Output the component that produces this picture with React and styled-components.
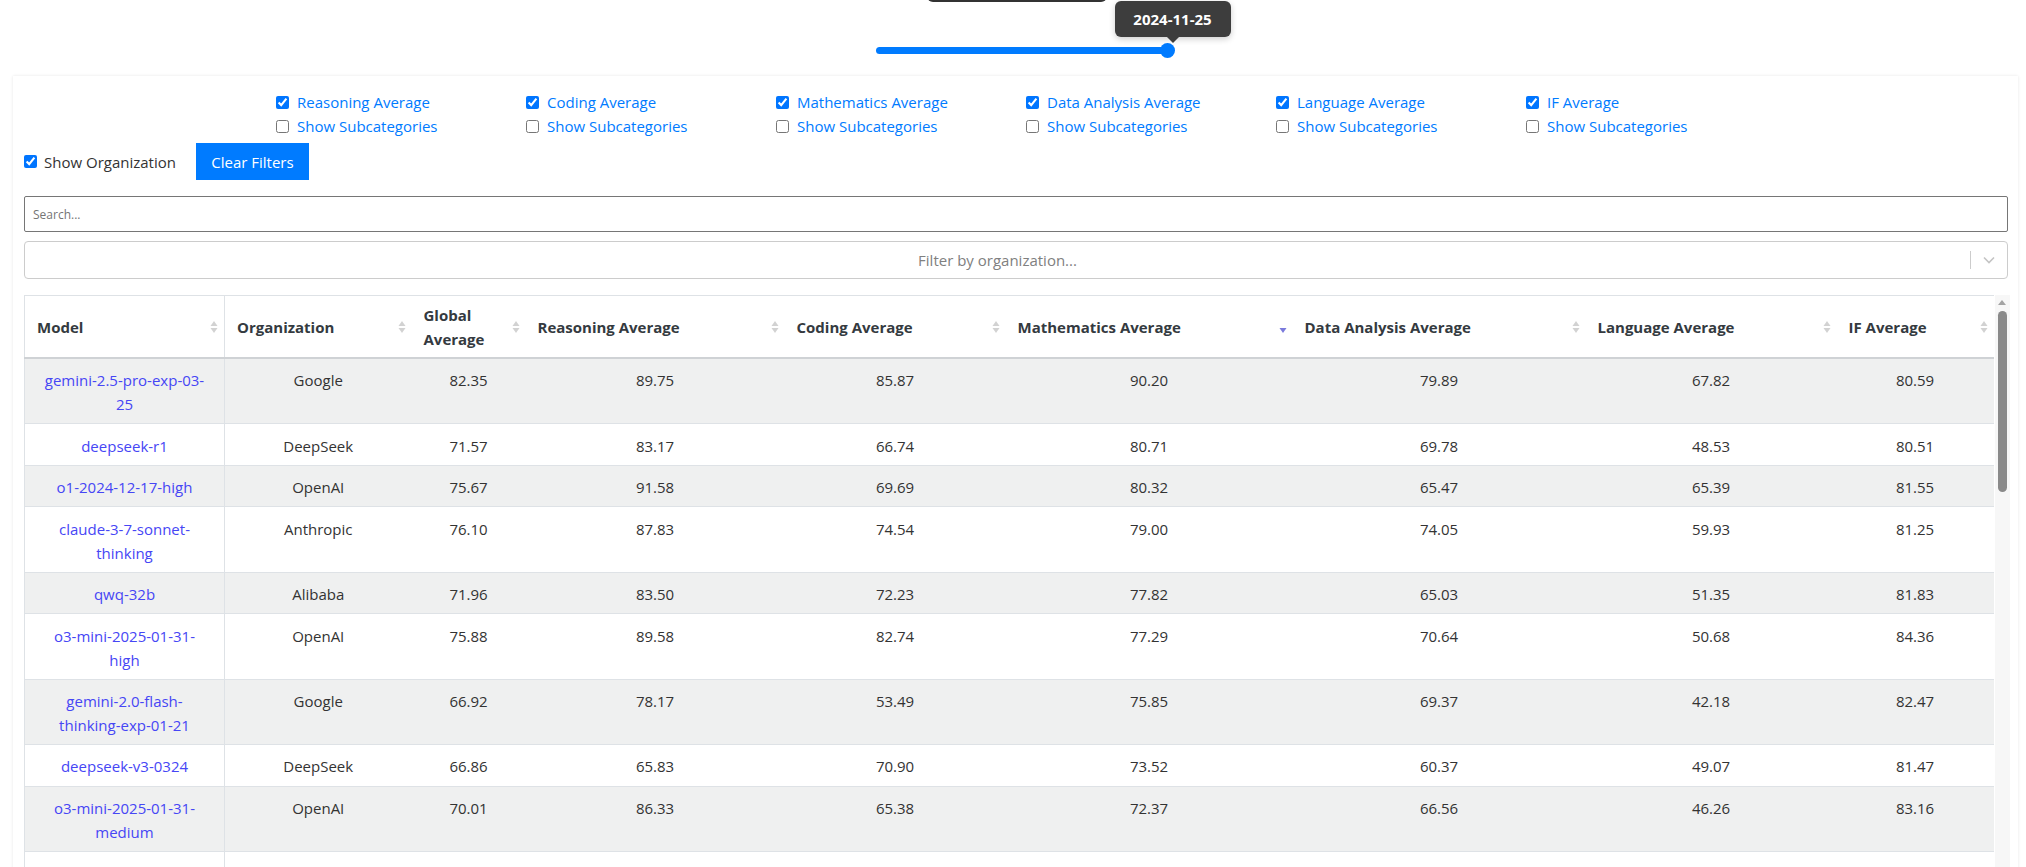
import React from 'react';
import styled, { createGlobalStyle } from 'styled-components';

const GlobalStyle = createGlobalStyle`
  body {
    margin: 0;
    background: #fff;
    font-family: "Open Sans", "Noto Sans", sans-serif;
    color: #333;
  }
`;

const SliderSection = styled.div`
  position: relative;
  height: 76px;
`;

const TopTip = styled.div`
  position: absolute;
  left: 927px;
  top: -4px;
  width: 180px;
  height: 6px;
  background: #333;
  border-radius: 0 0 6px 6px;
`;

const SliderRow = styled.div`
  display: flex;
  padding: 47px 0 0 876px;
`;

const Track = styled.div`
  position: relative;
  width: 291px;
  height: 7px;
  background: #007bff;
  border-radius: 4px;
`;

const Thumb = styled.span`
  position: absolute;
  right: -7.5px;
  top: -4px;
  width: 15px;
  height: 15px;
  border-radius: 50%;
  background: #007bff;
`;

const Tooltip = styled.div`
  position: absolute;
  left: -45px;
  bottom: calc(100% + 6px);
  width: 116px;
  height: 36px;
  display: flex;
  align-items: center;
  justify-content: center;
  background: #3d3d3d;
  color: #fff;
  font-weight: 700;
  font-size: 15px;
  border-radius: 6px;
  box-shadow: 0 2px 6px rgba(0, 0, 0, 0.2);

  &::after {
    content: '';
    position: absolute;
    left: 50%;
    top: 100%;
    margin-left: -6px;
    border: 6px solid transparent;
    border-top-color: #3d3d3d;
    border-bottom: 0;
  }
`;

const Card = styled.div`
  margin: 0 8px 0 13px;
  padding: 14px 10px 0 11px;
  background: #fff;
  box-shadow: 0 0 3px rgba(0, 0, 0, 0.1);
`;

const FilterGroups = styled.div`
  display: flex;
  padding-left: 252px;
`;

const FilterGroup = styled.div`
  width: 250px;
  display: flex;
  flex-direction: column;
`;

const CheckRow = styled.label`
  display: flex;
  align-items: center;
  height: 24px;
  font-size: 15px;
  color: ${(p) => p.$color || '#007bff'};
  white-space: nowrap;

  input {
    width: 13px;
    height: 13px;
    margin: 0 ${(p) => p.$gap || 8}px 0 0;
  }
`;

const Controls = styled.div`
  display: flex;
  align-items: center;
  gap: 20px;
  margin-top: 5px;
`;

const ClearButton = styled.button`
  width: 113px;
  height: 37px;
  border: none;
  background: #007bff;
  color: #fff;
  font-family: inherit;
  font-size: 15px;
  padding: 0;
`;

const SearchInput = styled.input`
  display: block;
  box-sizing: border-box;
  width: 100%;
  height: 36px;
  margin-top: 16px;
  padding: 0 8px;
  border: 1px solid #767676;
  border-radius: 2px;
  font-family: inherit;
  font-size: 12px;
  color: #333;

  &::placeholder {
    color: #757575;
  }
`;

const SelectBox = styled.div`
  display: flex;
  align-items: center;
  height: 38px;
  box-sizing: border-box;
  margin-top: 9px;
  border: 1px solid #ccc;
  border-radius: 4px;
`;

const SelectPlaceholder = styled.div`
  flex: 1;
  text-align: center;
  font-size: 15px;
  color: #808080;
`;

const SelectSeparator = styled.span`
  width: 1px;
  height: 18px;
  background: #ccc;
`;

const SelectArrow = styled.span`
  display: flex;
  width: 36px;
  justify-content: center;
`;

const TableArea = styled.div`
  display: flex;
  margin-top: 16px;
`;

const TableScroll = styled.div`
  flex: 1;
`;

const Table = styled.table`
  width: 1969px;
  table-layout: fixed;
  border-collapse: collapse;
  font-size: 15px;
  line-height: 24px;
`;

const HeadCell = styled.th`
  padding: 0 6px 0 12px;
  height: 61px;
  border-top: 1px solid #dee2e6;
  border-bottom: 2px solid #cfd2d5;
  border-left: ${(p) => (p.$first ? '1px solid #dee2e6' : 'none')};
  border-right: ${(p) => (p.$divider ? '1px solid #dee2e6' : 'none')};
  background: #fff;
  text-align: left;
  font-weight: 700;
  color: #343a40;
  vertical-align: middle;
`;

const HeadInner = styled.div`
  display: flex;
  align-items: center;
  justify-content: space-between;
  gap: 8px;
`;

const Row = styled.tr`
  background: ${(p) => (p.$striped ? '#eff0f0' : '#fff')};
`;

const Cell = styled.td`
  padding: 9.1px ${(p) => (p.$link ? 17 : 12)}px 7.4px;
  border-bottom: 1px solid #dee2e6;
  border-left: ${(p) => (p.$first ? '1px solid #dee2e6' : 'none')};
  border-right: ${(p) => (p.$divider ? '1px solid #dee2e6' : 'none')};
  text-align: center;
  vertical-align: top;
  color: ${(p) => (p.$link ? '#4646f5' : '#333')};
`;

const Scrollbar = styled.div`
  width: 15px;
  flex: none;
  margin-left: 1px;
  background: #f7f7f7;
  display: flex;
  flex-direction: column;
  align-items: center;
  padding-top: 5px;
  height: 600px;
`;

const ScrollArrow = styled.span`
  width: 0;
  height: 0;
  border-left: 4px solid transparent;
  border-right: 4px solid transparent;
  border-bottom: 5px solid #a3a3a3;
`;

const ScrollThumb = styled.span`
  width: 9px;
  height: 181px;
  margin-top: 6px;
  border-radius: 5px;
  background: #8a8a8a;
`;

const SortIcon = ({ active }) => (
  <svg width="8" height="14" viewBox="0 0 8 14" style={{ flex: 'none' }}>
    {!active && <path d="M4 1 L7.5 6 H0.5 Z" fill="#d2d2d2" />}
    <path d="M0.5 8 H7.5 L4 13 Z" fill={active ? '#7a7adc' : '#d2d2d2'} />
  </svg>
);

const columns = [
  { key: 'model', label: 'Model', width: 200 },
  { key: 'org', label: 'Organization', width: 187 },
  { key: 'global', label: 'Global Average', width: 114 },
  { key: 'reasoning', label: 'Reasoning Average', width: 259 },
  { key: 'coding', label: 'Coding Average', width: 221 },
  { key: 'math', label: 'Mathematics Average', width: 287, sorted: true },
  { key: 'data', label: 'Data Analysis Average', width: 293 },
  { key: 'language', label: 'Language Average', width: 251 },
  { key: 'if', label: 'IF Average', width: 157 },
];

const rows = [
  ['gemini-2.5-pro-exp-03-25', 'Google', '82.35', '89.75', '85.87', '90.20', '79.89', '67.82', '80.59'],
  ['deepseek-r1', 'DeepSeek', '71.57', '83.17', '66.74', '80.71', '69.78', '48.53', '80.51'],
  ['o1-2024-12-17-high', 'OpenAI', '75.67', '91.58', '69.69', '80.32', '65.47', '65.39', '81.55'],
  ['claude-3-7-sonnet-thinking', 'Anthropic', '76.10', '87.83', '74.54', '79.00', '74.05', '59.93', '81.25'],
  ['qwq-32b', 'Alibaba', '71.96', '83.50', '72.23', '77.82', '65.03', '51.35', '81.83'],
  ['o3-mini-2025-01-31-high', 'OpenAI', '75.88', '89.58', '82.74', '77.29', '70.64', '50.68', '84.36'],
  ['gemini-2.0-flash-thinking-exp-01-21', 'Google', '66.92', '78.17', '53.49', '75.85', '69.37', '42.18', '82.47'],
  ['deepseek-v3-0324', 'DeepSeek', '66.86', '65.83', '70.90', '73.52', '60.37', '49.07', '81.47'],
  ['o3-mini-2025-01-31-medium', 'OpenAI', '70.01', '86.33', '65.38', '72.37', '66.56', '46.26', '83.16'],
  ['gemini-exp-1206', 'Google', '64.09', '57.00', '63.41', '72.36', '63.16', '51.29', '77.34'],
];

const categories = [
  'Reasoning Average',
  'Coding Average',
  'Mathematics Average',
  'Data Analysis Average',
  'Language Average',
  'IF Average',
];

export default function App() {
  return (
    <>
      <GlobalStyle />
      <SliderSection>
        <TopTip />
        <SliderRow>
          <Track>
            <Thumb>
              <Tooltip>2024-11-25</Tooltip>
            </Thumb>
          </Track>
        </SliderRow>
      </SliderSection>

      <Card>
        <FilterGroups>
          {categories.map((c) => (
            <FilterGroup key={c}>
              <CheckRow>
                <input type="checkbox" defaultChecked />
                {c}
              </CheckRow>
              <CheckRow>
                <input type="checkbox" />
                Show Subcategories
              </CheckRow>
            </FilterGroup>
          ))}
        </FilterGroups>

        <Controls>
          <CheckRow $color="#333" $gap={7}>
            <input type="checkbox" defaultChecked />
            Show Organization
          </CheckRow>
          <ClearButton>Clear Filters</ClearButton>
        </Controls>

        <SearchInput placeholder="Search..." />

        <SelectBox>
          <SelectPlaceholder>Filter by organization...</SelectPlaceholder>
          <SelectSeparator />
          <SelectArrow>
            <svg width="14" height="10" viewBox="0 0 14 10">
              <path d="M2 2.5 L7 7.5 L12 2.5" fill="none" stroke="#c4c4c4" strokeWidth="1.6" />
            </svg>
          </SelectArrow>
        </SelectBox>

        <TableArea>
          <TableScroll>
            <Table>
              <colgroup>
                {columns.map((c) => (
                  <col key={c.key} style={{ width: c.width }} />
                ))}
              </colgroup>
              <thead>
                <tr>
                  {columns.map((c, i) => (
                    <HeadCell key={c.key} $first={i === 0} $divider={i === 0}>
                      <HeadInner>
                        <span>{c.label}</span>
                        <SortIcon active={c.sorted} />
                      </HeadInner>
                    </HeadCell>
                  ))}
                </tr>
              </thead>
              <tbody>
                {rows.map((r, ri) => (
                  <Row key={r[0]} $striped={ri % 2 === 0}>
                    {r.map((v, i) => (
                      <Cell key={i} $first={i === 0} $divider={i === 0} $link={i === 0}>
                        {v}
                      </Cell>
                    ))}
                  </Row>
                ))}
              </tbody>
            </Table>
          </TableScroll>
          <Scrollbar>
            <ScrollArrow />
            <ScrollThumb />
          </Scrollbar>
        </TableArea>
      </Card>
    </>
  );
}
